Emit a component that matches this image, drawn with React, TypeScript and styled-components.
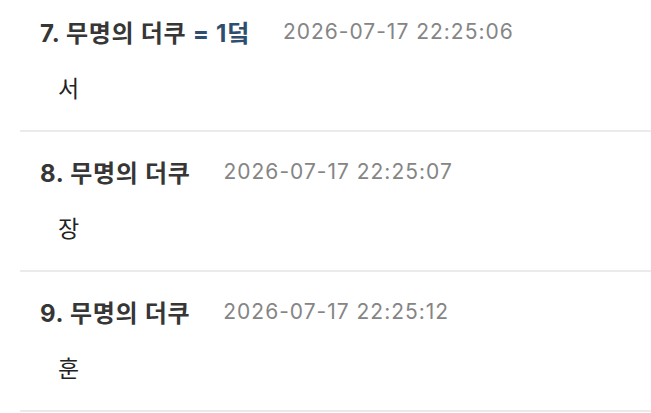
import React from 'react'
import styled, { createGlobalStyle } from 'styled-components'

const GlobalStyle = createGlobalStyle`
  html, body {
    margin: 0;
    padding: 0;
    background: #ffffff;
    overflow: hidden;
  }
  body {
    font-family: "Inter", "Noto Sans CJK KR", sans-serif;
  }
`

type Comment = {
  no: number
  nick: string
  op?: string
  time: string
  body: string
}

const comments: Comment[] = [
  { no: 7, nick: '무명의 더쿠', op: '= 1덬', time: '2026-07-17 22:25:06', body: '서' },
  { no: 8, nick: '무명의 더쿠', time: '2026-07-17 22:25:07', body: '장' },
  { no: 9, nick: '무명의 더쿠', time: '2026-07-17 22:25:12', body: '훈' },
]

export default function App() {
  return (
    <>
      <GlobalStyle />
      <S.List>
        {comments.map((c) => (
          <S.Item key={c.no}>
            <S.Head>
              <S.Nick>
                {c.no}. {c.nick}
                {c.op && <S.Op> {c.op}</S.Op>}
              </S.Nick>
              <S.Time>{c.time}</S.Time>
            </S.Head>
            <S.Body>{c.body}</S.Body>
          </S.Item>
        ))}
      </S.List>
    </>
  )
}

const S = {
  List: styled.ul`
    list-style: none;
    margin: -8px 0 0;
    padding: 0 0 0 20px;
  `,

  Item: styled.li`
    padding: 19px 0 23px;
    border-bottom: 2px solid #ebebeb;
  `,

  Head: styled.div`
    display: flex;
    align-items: center;
    gap: 33px;
    height: 40px;
    padding-left: 20px;
  `,

  Nick: styled.span`
    font-size: 24px;
    font-weight: 700;
    letter-spacing: 0.7px;
    color: #363636;
    white-space: nowrap;
  `,

  Op: styled.span`
    color: #2f4d6e;
  `,

  Time: styled.span`
    font-size: 21px;
    color: #858585;
    letter-spacing: 1px;
    white-space: nowrap;
  `,

  Body: styled.div`
    margin-top: 20px;
    padding-left: 38px;
    height: 36px;
    line-height: 36px;
    font-size: 23px;
    color: #222222;
  `,
}
